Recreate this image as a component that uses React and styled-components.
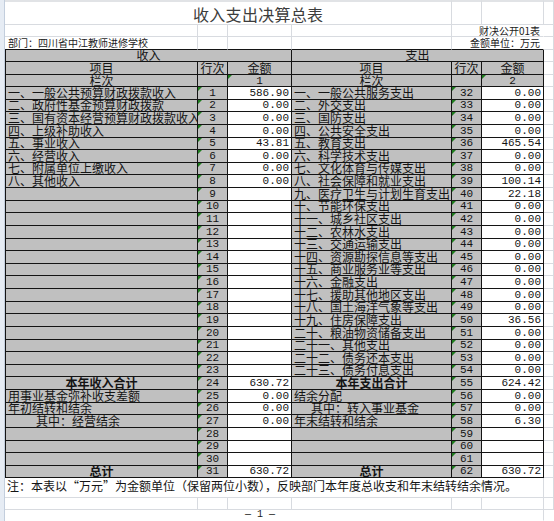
import React from "react";
import styled, { createGlobalStyle } from "styled-components";

const GRID = "#d8dbe0";
const INK = "#141414";
const SILVER = "#c0c0c0";

const income = [
  { no: 1, label: "一、一般公共预算财政拨款收入", amount: "586.90" },
  { no: 2, label: "二、政府性基金预算财政拨款", amount: "0.00" },
  { no: 3, label: "三、国有资本经营预算财政拨款收入", amount: "0.00" },
  { no: 4, label: "四、上级补助收入", amount: "0.00" },
  { no: 5, label: "五、事业收入", amount: "43.81" },
  { no: 6, label: "六、经营收入", amount: "0.00" },
  { no: 7, label: "七、附属单位上缴收入", amount: "0.00" },
  { no: 8, label: "八、其他收入", amount: "0.00" },
  ...Array.from({ length: 15 }, (_, i) => ({ no: 9 + i, label: "", amount: "" })),
  { no: 24, label: "本年收入合计", amount: "630.72", total: true },
  { no: 25, label: "用事业基金弥补收支差额", amount: "0.00" },
  { no: 26, label: "年初结转和结余", amount: "0.00" },
  { no: 27, label: "其中：经营结余", amount: "0.00", indent: 28 },
  { no: 28, label: "", amount: "" },
  { no: 29, label: "", amount: "" },
  { no: 30, label: "", amount: "" },
  { no: 31, label: "总计", amount: "630.72", total: true },
];

const spending = [
  { no: 32, label: "一、一般公共服务支出", amount: "0.00" },
  { no: 33, label: "二、外交支出", amount: "0.00" },
  { no: 34, label: "三、国防支出", amount: "0.00" },
  { no: 35, label: "四、公共安全支出", amount: "0.00" },
  { no: 36, label: "五、教育支出", amount: "465.54" },
  { no: 37, label: "六、科学技术支出", amount: "0.00" },
  { no: 38, label: "七、文化体育与传媒支出", amount: "0.00" },
  { no: 39, label: "八、社会保障和就业支出", amount: "100.14" },
  { no: 40, label: "九、医疗卫生与计划生育支出", amount: "22.18" },
  { no: 41, label: "十、节能环保支出", amount: "0.00" },
  { no: 42, label: "十一、城乡社区支出", amount: "0.00" },
  { no: 43, label: "十二、农林水支出", amount: "0.00" },
  { no: 44, label: "十三、交通运输支出", amount: "0.00" },
  { no: 45, label: "十四、资源勘探信息等支出", amount: "0.00" },
  { no: 46, label: "十五、商业服务业等支出", amount: "0.00" },
  { no: 47, label: "十六、金融支出", amount: "0.00" },
  { no: 48, label: "十七、援助其他地区支出", amount: "0.00" },
  { no: 49, label: "十八、国土海洋气象等支出", amount: "0.00" },
  { no: 50, label: "十九、住房保障支出", amount: "36.56" },
  { no: 51, label: "二十、粮油物资储备支出", amount: "0.00" },
  { no: 52, label: "二十一、其他支出", amount: "0.00" },
  { no: 53, label: "二十二、债务还本支出", amount: "0.00" },
  { no: 54, label: "二十三、债务付息支出", amount: "0.00" },
  { no: 55, label: "本年支出合计", amount: "624.42", total: true },
  { no: 56, label: "结余分配", amount: "0.00" },
  { no: 57, label: "其中：转入事业基金", amount: "0.00", indent: 17 },
  { no: 58, label: "年末结转和结余", amount: "6.30" },
  { no: 59, label: "", amount: "" },
  { no: 60, label: "", amount: "" },
  { no: 61, label: "", amount: "" },
  { no: 62, label: "总计", amount: "630.72", total: true },
];

const App = () => {
  return (
    <>
      <GlobalStyle />
      <Page>
        <Strip />
        <Sheet>
          {/* title */}
          <TitleCell $span={4}>收入支出决算总表</TitleCell>
          <Gap $top />
          <Gap $top />
          <Gap $top />

          <Gap />
          <Gap />
          <Gap />
          <Gap />
          <Meta $span={2} $right>
            财决公开01表
          </Meta>
          <Gap />

          <Meta $edge>部门：四川省中江教师进修学校</Meta>
          <Gap $edge />
          <Gap $edge />
          <Gap $edge />
          <Meta $span={2} $right $edge>
            金额单位：万元
          </Meta>
          <Gap />

          <HeadCell $span={3} $first>
            收入
          </HeadCell>
          <HeadCell $span={3}>支出</HeadCell>
          <Gap />

          <HeadCell $first>项目</HeadCell>
          <HeadCell>行次</HeadCell>
          <HeadCell>金额</HeadCell>
          <HeadCell>项目</HeadCell>
          <HeadCell>行次</HeadCell>
          <HeadCell>金额</HeadCell>
          <Gap />

          <HeadCell $first>栏次</HeadCell>
          <HeadCell />
          <HeadCell $mark $num>
            1
          </HeadCell>
          <HeadCell>栏次</HeadCell>
          <HeadCell />
          <HeadCell $mark $num>
            2
          </HeadCell>
          <Gap />

          {income.map((row, i) => {
            const out = spending[i];
            return (
              <React.Fragment key={row.no}>
                <Item $first $total={row.total} $indent={row.indent}>
                  {row.label}
                </Item>
                <LineNo>{row.no}</LineNo>
                <Amount>{row.amount}</Amount>
                <Item $total={out.total} $indent={out.indent}>
                  {out.label}
                </Item>
                <LineNo>{out.no}</LineNo>
                <Amount>{out.amount}</Amount>
                <Gap />
              </React.Fragment>
            );
          })}

          <Note $span={6}>
            注：本表以“万元”为金额单位（保留两位小数），反映部门本年度总收支和年末结转结余情况。
          </Note>
          <Gap />

          <Gap />
          <Gap />
          <Gap />
          <Gap />
          <Gap />
          <Gap />
          <Gap />

          <Gap $bare />
          <Gap $bare />
          <PageNo $span={4}>— 1 —</PageNo>
          <Gap $bare />
        </Sheet>
      </Page>
    </>
  );
};

const GlobalStyle = createGlobalStyle`
  html, body {
    margin: 0;
    padding: 0;
    background: #ffffff;
    overflow: hidden;
  }
  body {
    font-family: "Noto Sans CJK SC", "Noto Sans", sans-serif;
    color: ${INK};
  }
`;

const Page = styled.div`
  display: flex;
  width: 554px;
  height: 521px;
  overflow: hidden;
`;

const Strip = styled.div`
  box-sizing: border-box;
  width: 5px;
  flex: none;
  background: #e6ecf4;
  border-right: 1px solid #c3cedd;
`;

const Sheet = styled.div`
  display: grid;
  grid-template-columns: 193px 30px 64px 160px 30px 62px 10px;
  grid-template-rows:
    25px 12px 12.5px 12.5px 13px 12px
    repeat(31, 12.63px)
    20px 12px 10.5px;
  width: 549px;
`;

const Cell = styled.div`
  box-sizing: border-box;
  min-width: 0;
  overflow: hidden;
  white-space: nowrap;
  display: flex;
  align-items: center;
  grid-column: span ${(p) => p.$span || 1};
`;

const Gap = styled(Cell)`
  border-right: 1px solid ${(p) => (p.$bare ? "transparent" : GRID)};
  border-bottom: 1px solid ${(p) => (p.$edge ? INK : p.$bare ? "transparent" : GRID)};
  border-top: ${(p) => (p.$top ? "2px solid #e1e3e6" : "none")};
`;

const TitleCell = styled(Gap)`
  position: relative;
  border-top: 2px solid #e1e3e6;
  align-items: flex-end;
  padding: 0 0 2px 188px;
  font-size: 16px;
  line-height: 1;
  letter-spacing: 0.3px;
  color: #3c3c3c;

  &::after {
    content: "";
    position: absolute;
    top: -2px;
    left: 272px;
    width: 175px;
    height: 2px;
    background: #f2b25c;
  }
`;

const Meta = styled(Gap)`
  font-size: 10px;
  line-height: 1;
  padding: 0 3px 0 3px;
  justify-content: ${(p) => (p.$right ? "flex-end" : "flex-start")};
  border-right-color: ${(p) => (p.$right ? "transparent" : GRID)};
  color: #1c1c1c;
`;

const Framed = styled(Cell)`
  border-right: 1px solid ${INK};
  border-bottom: 1px solid ${INK};
  border-left: ${(p) => (p.$first ? `1px solid ${INK}` : "none")};
  font-size: 12px;
  line-height: 12px;
`;

const markStyle = `
  position: relative;
  &::before {
    content: "";
    position: absolute;
    top: 0;
    left: 0;
    border-top: 4px solid #1e7d1e;
    border-right: 4px solid transparent;
  }
`;

const HeadCell = styled(Framed)`
  background: ${SILVER};
  justify-content: center;
  font-family: ${(p) => (p.$num ? `"Liberation Mono", monospace` : "inherit")};
  font-size: ${(p) => (p.$num ? "11px" : "12px")};
  ${(p) => (p.$mark ? markStyle : "")}
`;

const Item = styled(Framed)`
  background: ${SILVER};
  align-items: flex-end;
  justify-content: ${(p) => (p.$total ? "center" : "flex-start")};
  font-weight: ${(p) => (p.$total ? 700 : 400)};
  padding-left: ${(p) => (p.$total ? 0 : 2 + (p.$indent || 0))}px;
`;

const LineNo = styled(Framed)`
  ${markStyle}
  background: ${SILVER};
  justify-content: center;
  align-items: flex-end;
  font-family: "Liberation Mono", monospace;
  font-size: 11px;
  line-height: 11px;
`;

const Amount = styled(Framed)`
  background: #ffffff;
  justify-content: flex-end;
  align-items: flex-end;
  padding-right: 2px;
  font-family: "Liberation Mono", monospace;
  font-size: 11px;
  line-height: 11px;
`;

const Note = styled(Gap)`
  font-size: 12px;
  line-height: 1;
  padding: 0 0 3px 2px;
  align-items: center;
`;

const PageNo = styled(Gap)`
  border-bottom-color: transparent;
  font-family: "Liberation Mono", monospace;
  font-size: 10px;
  padding-left: 17px;
  align-items: flex-end;
  color: #222;
`;

export default App;
